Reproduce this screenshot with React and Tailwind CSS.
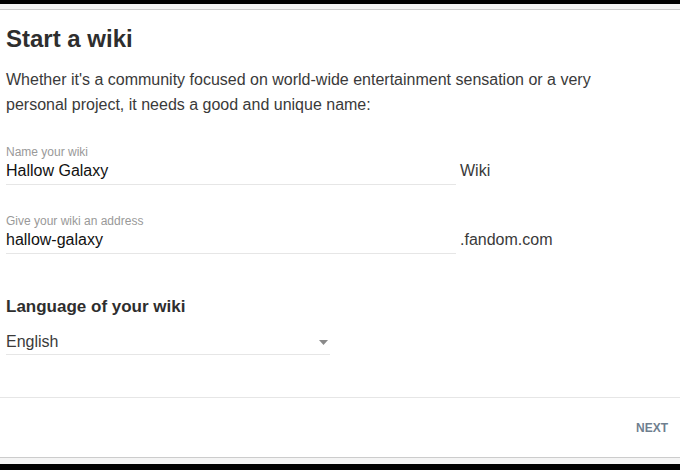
import React from "react";

// Single "Start a wiki" step of the create-wiki flow.

function Field({ label, value, suffix }) {
    return (
        <div>
            <div className="text-[12px] leading-[14px] text-[#999]">{label}</div>
            <div className="mt-px flex items-start">
                <div className="w-[450px] border-b border-[#e6e6e6] pt-px pb-[3px] text-[16px] leading-[20px] text-[#111]">
                    {value}
                </div>
                <span className="ml-[4px] pt-px text-[16px] leading-[20px] text-[#3a3a3a]">{suffix}</span>
            </div>
        </div>
    );
}

export default function App() {
    return (
        <div
            className="flex h-[470px] w-[680px] flex-col bg-white"
            style={{ fontFamily: '"Liberation Sans", Arial, sans-serif' }}
        >
            <div className="h-[4px] bg-black" />
            <div className="h-[5px] border-b border-[#cccccc] bg-[#f4f4f4] box-content" />

            <main className="px-[6px]">
                <h1 className="mt-[15px] text-[24px] font-bold leading-[28px] text-[#2e2e2e]">
                    Start a wiki
                </h1>
                <p className="mt-[14px] max-w-[600px] text-[16px] leading-[25px] text-[#3a3a3a]">
                    Whether it's a community focused on world-wide entertainment sensation or a very
                    personal project, it needs a good and unique name:
                </p>

                <div className="mt-[28px]">
                    <Field label="Name your wiki" value="Hallow Galaxy" suffix="Wiki" />
                </div>
                <div className="mt-[29px]">
                    <Field label="Give your wiki an address" value="hallow-galaxy" suffix=".fandom.com" />
                </div>

                <h2 className="mt-[43px] text-[17px] font-bold leading-[20px] text-[#2e2e2e]">
                    Language of your wiki
                </h2>
                <div className="mt-[14px] flex w-[324px] items-center justify-between border-b border-[#e6e6e6] pt-px pb-[2px]">
                    <span className="text-[16px] leading-[20px] text-[#3a3a3a]">English</span>
                    <svg width="9" height="5" viewBox="0 0 9 5" className="mr-[2px]">
                        <path d="M0 0h9L4.5 5z" fill="#8a8a8a" />
                    </svg>
                </div>
            </main>

            <div className="mt-[42px] border-t border-[#e6e6e6]" />
            <footer className="flex h-[59px] items-center justify-end pr-[12px]">
                <button
                    type="button"
                    className="text-[12px] font-bold uppercase leading-[14px] text-[#6f7f8f]"
                >
                    Next
                </button>
            </footer>
            <div className="border-t border-[#cccccc]" />
            <div className="h-[6px] bg-[#f4f4f4]" />
            <div className="flex-1 bg-black" />
        </div>
    );
}
